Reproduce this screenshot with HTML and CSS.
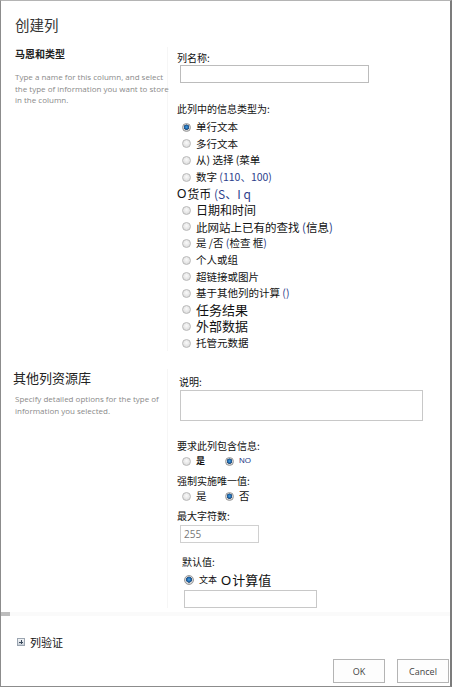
FILE: index.html
```html
<!doctype html>
<html lang="zh-CN">
<head>
    <meta charset="UTF-8" />
    <title>创建列</title>
    <link rel="stylesheet" href="styles.css">
</head>
<body>
    <div class="dialog">
        <div class="dialog-body">
            <h1 class="title">创建列</h1>

            <div class="section section-name">
                <div class="side">
                    <h2 class="side-head">马恩和类型</h2>
                    <p class="side-desc">Type a name for this column, and select the type of information you want to store in the column.</p>
                </div>
                <div class="main">
                    <label class="field-label" for="colName">列名称:</label>
                    <input class="text-input name-input" type="text" id="colName" />
                    <div class="field-label type-label">此列中的信息类型为:</div>
                    <ul class="type-list">
                        <li><span class="radio checked"></span>单行文本</li>
                        <li><span class="radio"></span>多行文本</li>
                        <li><span class="radio"></span>从) 选择 (菜单</li>
                        <li><span class="radio"></span>数字 <span class="tint">(110、100)</span></li>
                        <li class="plain big"><span class="oh">O</span>货币 <span class="tint">(S、I q</span></li>
                        <li class="big"><span class="radio"></span>日期和时间</li>
                        <li class="mid"><span class="radio"></span>此网站上已有的查找 <span class="tint">(</span>信息<span class="tint">)</span></li>
                        <li><span class="radio"></span>是 /否 <span class="tint">(</span>检查 框<span class="tint">)</span></li>
                        <li><span class="radio"></span>个人或组</li>
                        <li><span class="radio"></span>超链接或图片</li>
                        <li><span class="radio"></span>基于其他列的计算 <span class="tint">()</span></li>
                        <li class="large"><span class="radio"></span>任务结果</li>
                        <li class="large"><span class="radio"></span>外部数据</li>
                        <li><span class="radio"></span>托管元数据</li>
                    </ul>
                </div>
            </div>

            <div class="section section-extra">
                <div class="side">
                    <h2 class="side-head wide">其他列资源库</h2>
                    <p class="side-desc">Specify detailed options for the type of information you selected.</p>
                </div>
                <div class="main">
                    <label class="field-label desc-label" for="colDesc">说明:</label>
                    <textarea class="text-input desc-input" id="colDesc"></textarea>

                    <div class="field-label gap-lg">要求此列包含信息:</div>
                    <div class="choice-row">
                        <span class="choice"><span class="radio"></span><span class="yes-bold">是</span></span>
                        <span class="choice second"><span class="radio checked"></span><span class="no">NO</span></span>
                    </div>

                    <div class="field-label gap-sm">强制实施唯一值:</div>
                    <div class="choice-row">
                        <span class="choice"><span class="radio"></span>是</span>
                        <span class="choice second"><span class="radio checked"></span>否</span>
                    </div>

                    <label class="field-label gap-sm" for="maxLen">最大字符数:</label>
                    <input class="text-input max-input" type="text" id="maxLen" value="255" />

                    <div class="field-label default-label">默认值:</div>
                    <div class="choice-row default-row">
                        <span class="radio checked big-radio"></span>
                        <span class="small-text">文本</span>
                        <span class="calc"><span class="oh">O</span>计算值</span>
                    </div>
                    <input class="text-input default-input" type="text" />
                </div>
            </div>
        </div>

        <div class="hscroll"><span class="thumb"></span></div>

        <div class="dialog-foot">
            <div class="validation"><span class="expand-icon"></span>列验证</div>
            <div class="buttons">
                <button class="btn">OK</button>
                <button class="btn">Cancel</button>
            </div>
        </div>
    </div>
</body>
</html>
```

FILE: styles.css
```css
body {
    margin: 0;
    padding: 0;
    background: #ffffff;
    font-family: "Noto Sans CJK SC", "Noto Sans", sans-serif;
    color: #111;
}
.dialog {
    width: 452px;
    height: 687px;
    box-sizing: border-box;
    border-top: 1px solid #b4b4b4;
    border-left: 1px solid #8c8c8c;
    border-right: 2px solid #7c7c7c;
    border-bottom: 1px solid #8c8c8c;
    display: flex;
    flex-direction: column;
}
.dialog-body {
    height: 611px;
    overflow: hidden;
}
.title {
    margin: 13px 0 0 14px;
    font-size: 14.5px;
    line-height: 22px;
    font-weight: normal;
    color: #333;
}

/* two-column sections */
.section {
    display: grid;
    grid-template-columns: 167px 1fr;
}
.section-name {
    margin-top: 11px;
}
.section-extra {
    margin-top: 18px;
}
.side {
    border-right: 1px solid #f6f6f6;
    padding-left: 14px;
}
.side-head {
    margin: 0;
    font-size: 10px;
    line-height: 14px;
    font-weight: bold;
    color: #222;
}
.side-head.wide {
    margin-left: -2px;
    font-size: 13px;
    line-height: 18px;
    font-weight: normal;
}
.side-desc {
    margin: 10px 0 0 0;
    width: 156px;
    font-family: "Open Sans", sans-serif;
    font-size: 8px;
    line-height: 11.5px;
    color: #8a8a8a;
}
.section-extra .side-desc {
    margin-top: 6px;
}
.main {
    padding-left: 9px;
}
.section-name .main {
    padding-top: 4px;
}
.section-extra .main {
    padding-top: 6px;
}

.field-label {
    display: block;
    font-size: 10px;
    line-height: 14px;
    color: #111;
}
.type-label {
    margin-top: 19px;
}
.desc-label {
    margin-left: 2px;
}
.gap-lg {
    margin-top: 18px;
}
.gap-sm {
    margin-top: 5px;
}
.default-label {
    margin: 12px 0 0 5px;
}

.text-input {
    display: block;
    box-sizing: border-box;
    margin-left: 3px;
    border: 1px solid #bcbcbc;
    background: #fff;
    font-family: "Open Sans", sans-serif;
    font-size: 10px;
    padding: 0 3px;
}
.name-input {
    width: 189px;
    height: 18px;
}
.desc-input {
    margin-top: 1px;
    width: 243px;
    height: 31px;
    resize: none;
    border-color: #c8c8c8;
}
.max-input {
    margin-top: 2px;
    width: 79px;
    height: 18px;
    color: #777;
    border-color: #d0d0d0;
}
.default-input {
    margin: 2px 0 0 7px;
    width: 133px;
    height: 18px;
    border-color: #c8c8c8;
}

/* radio list */
.type-list {
    list-style: none;
    margin: 3px 0 0 5px;
    padding: 0;
}
.type-list li {
    display: flex;
    align-items: center;
    height: 16.6px;
    line-height: 16px;
    font-size: 10.5px;
    white-space: pre;
}
.type-list li.mid {
    font-size: 11.5px;
}
.type-list li.big {
    font-size: 12px;
}
.type-list li.large {
    font-size: 13px;
}
.type-list li.plain {
    margin-left: -5px;
}
.oh {
    font-family: "Liberation Sans", sans-serif;
    margin-right: 1px;
}
.tint {
    color: #2d3f8c;
}

.radio {
    display: inline-block;
    flex: none;
    width: 9px;
    height: 9px;
    box-sizing: border-box;
    border-radius: 50%;
    border: 1px solid #b9b9b9;
    background: radial-gradient(circle at 50% 40%, #fafafa 0%, #e4e4e4 60%, #d2d2d2 100%);
    margin-right: 5px;
}
.radio.checked {
    border-color: #9a9a9a;
    background: radial-gradient(circle at 50% 45%, #4aa2e2 0%, #1a63a8 35%, #2c4f78 48%, #d8d8d8 55%, #c4c4c4 100%);
}
.big-radio {
    width: 10px;
    height: 10px;
}

/* yes / no rows */
.choice-row {
    display: flex;
    align-items: center;
    height: 16px;
    line-height: 16px;
    margin-left: 5px;
    font-size: 10.5px;
}
.choice {
    display: flex;
    align-items: center;
    width: 43px;
}
.yes-bold {
    font-size: 9px;
    font-weight: bold;
}
.no {
    font-family: "Liberation Sans", sans-serif;
    font-size: 8px;
    color: #1d3a86;
}
.default-row {
    margin: 3px 0 0 7px;
}
.small-text {
    font-size: 9px;
    margin-right: 4px;
}
.calc {
    font-size: 13px;
}

/* horizontal scrollbar stub */
.hscroll {
    height: 4px;
    background: #fafafa;
}
.thumb {
    display: block;
    width: 9px;
    height: 4px;
    background: #bdbdbd;
}

.dialog-foot {
    flex: 1;
    display: flex;
    flex-direction: column;
    padding-top: 18px;
}
.validation {
    display: flex;
    align-items: center;
    height: 16px;
    margin-left: 16px;
    font-size: 11px;
}
.expand-icon {
    position: relative;
    width: 8px;
    height: 8px;
    box-sizing: border-box;
    border: 1px solid #9aa4b0;
    background: linear-gradient(#f4f6f8, #c9d0d8);
    margin-right: 5px;
}
.expand-icon::before,
.expand-icon::after {
    content: "";
    position: absolute;
    background: #3a4a5c;
}
.expand-icon::before {
    left: 1px;
    top: 2.5px;
    width: 4px;
    height: 1px;
}
.expand-icon::after {
    left: 2.5px;
    top: 1px;
    width: 1px;
    height: 4px;
}
.buttons {
    display: flex;
    justify-content: flex-end;
    gap: 12px;
    margin-top: 9px;
    padding-right: 1px;
}
.btn {
    width: 52px;
    height: 24px;
    border: 1px solid #b4b4b4;
    background: #fdfdfd;
    font-family: "Open Sans", sans-serif;
    font-size: 9px;
    color: #444;
    padding: 0;
}
```
